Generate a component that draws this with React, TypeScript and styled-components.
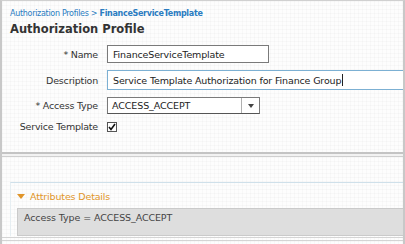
import React from "react";
import styled, { createGlobalStyle } from "styled-components";

const Global = createGlobalStyle`
  html, body { margin: 0; padding: 0; background: #fff; }
  body { font-family: Tahoma, "DejaVu Sans", Verdana, sans-serif; }
  * { box-sizing: border-box; }
`;

const Page = styled.div`
  width: 405px;
  height: 244px;
  border-left: 2px solid #c8c8c8;
  border-right: 2px solid #c8c8c8;
  border-top: 1px solid #d0d0d0;
  background-color: #fdfdfd;
  background-image:
    linear-gradient(rgba(0,0,0,0.018) 1px, transparent 1px),
    linear-gradient(90deg, rgba(0,0,0,0.018) 1px, transparent 1px);
  background-size: 4px 4px;
  display: flex;
  flex-direction: column;
  overflow: hidden;
  font-family: "DejaVu Sans", sans-serif;
`;

const Top = styled.div`
  padding: 7px 0 0 8px;
`;

const Crumbs = styled.div`
  font-size: 8px;
  color: #2a7cc1;
  line-height: 11px;
  letter-spacing: -0.3px;
`;

const CrumbCurrent = styled.b`
  font-weight: bold;
`;

const Title = styled.h1`
  margin: 2px 0 0 0;
  font-size: 11.5px;
  font-weight: bold;
  color: #333;
  line-height: 16px;
  letter-spacing: 0;
`;

const Form = styled.div`
  display: grid;
  grid-template-columns: 88px 1fr;
  column-gap: 9px;
  row-gap: 7px;
  margin-top: 8px;
  align-items: center;
`;

const Label = styled.label`
  text-align: right;
  font-size: 9.5px;
  color: #333;
  white-space: nowrap;
  letter-spacing: -0.2px;
`;

const Input = styled.div<{ $w: number; $focus?: boolean }>`
  width: ${(p) => p.$w}px;
  height: ${(p) => (p.$focus ? 20 : 18)}px;
  background: #fff;
  border: 1px solid #7a7a7a;
  ${(p) =>
    p.$focus &&
    `border-color: #7cb0d3; border-width: 1px 0 1px 1px;`}
  font-size: 9.5px;
  color: #222;
  display: flex;
  align-items: center;
  padding-left: 5px;
  white-space: nowrap;
  letter-spacing: -0.15px;
`;

const Caret = styled.span`
  display: inline-block;
  width: 1px;
  height: 12px;
  background: #222;
  margin-left: 1px;
`;

const Select = styled.div`
  width: 153px;
  height: 17px;
  background: #fff;
  border: 1px solid #7a7a7a;
  border-bottom-color: #555;
  display: flex;
  align-items: stretch;
  font-size: 9.5px;
  color: #222;
`;

const SelectValue = styled.div`
  flex: 1;
  display: flex;
  align-items: center;
  padding-left: 4px;
  letter-spacing: -0.1px;
`;

const SelectArrow = styled.div`
  width: 18px;
  border-left: 1px solid #b0b0b0;
  display: flex;
  align-items: center;
  justify-content: center;
  &::after {
    content: "";
    border-left: 3px solid transparent;
    border-right: 3px solid transparent;
    border-top: 4px solid #444;
    margin-top: 1px;
  }
`;

const Check = styled.div`
  width: 10px;
  height: 10px;
  border: 1px solid #555;
  background: #fff;
  display: flex;
  align-items: center;
  justify-content: center;
`;

const Separator = styled.div`
  margin-top: 20px;
  height: 5px;
  border-top: 2px solid #c4c4c4;
  border-bottom: 1px solid #cfcfcf;
  background: #f2f2f2;
`;

const Panel = styled.div`
  margin: 25px 0 0 8px;
  border-top: 1px solid #cfe0ea;
  border-left: 1px solid #e6eef2;
  padding: 8px 0 0 6px;
`;

const PanelHead = styled.div`
  display: flex;
  align-items: center;
  gap: 5px;
  color: #e0952a;
  font-size: 9.5px;
  letter-spacing: -0.15px;
  &::before {
    content: "";
    border-left: 4px solid transparent;
    border-right: 4px solid transparent;
    border-top: 5px solid #e0952a;
  }
`;

const AttrBox = styled.div`
  margin-top: 6px;
  height: 28px;
  background: #dedede;
  border: 1px solid #cacaca;
  border-right: none;
  padding: 3px 0 0 6px;
  font-size: 9.5px;
  color: #444;
  letter-spacing: -0.1px;
`;

const Bottom = styled.div`
  margin-top: 1px;
  height: 4px;
  border-top: 1px solid #d4d4d4;
  border-bottom: 1px solid #d4d4d4;
`;

export default function App() {
  return (
    <>
      <Global />
      <Page>
        <Top>
          <Crumbs>
            Authorization Profiles &gt; <CrumbCurrent>FinanceServiceTemplate</CrumbCurrent>
          </Crumbs>
          <Title>Authorization Profile</Title>
          <Form>
            <Label>* Name</Label>
            <Input $w={162}>FinanceServiceTemplate</Input>
            <Label>Description</Label>
            <Input $w={300} $focus>
              Service Template Authorization for Finance Group<Caret />
            </Input>
            <Label>* Access Type</Label>
            <Select>
              <SelectValue>ACCESS_ACCEPT</SelectValue>
              <SelectArrow />
            </Select>
            <Label>Service Template</Label>
            <Check>
              <svg width="8" height="8" viewBox="0 0 8 8">
                <path d="M1 4 L3 6.5 L7 1" fill="none" stroke="#111" strokeWidth="1.6" />
              </svg>
            </Check>
          </Form>
        </Top>
        <Separator />
        <Panel>
          <PanelHead>Attributes Details</PanelHead>
          <AttrBox>Access Type = ACCESS_ACCEPT</AttrBox>
        </Panel>
        <Bottom />
      </Page>
    </>
  );
}
